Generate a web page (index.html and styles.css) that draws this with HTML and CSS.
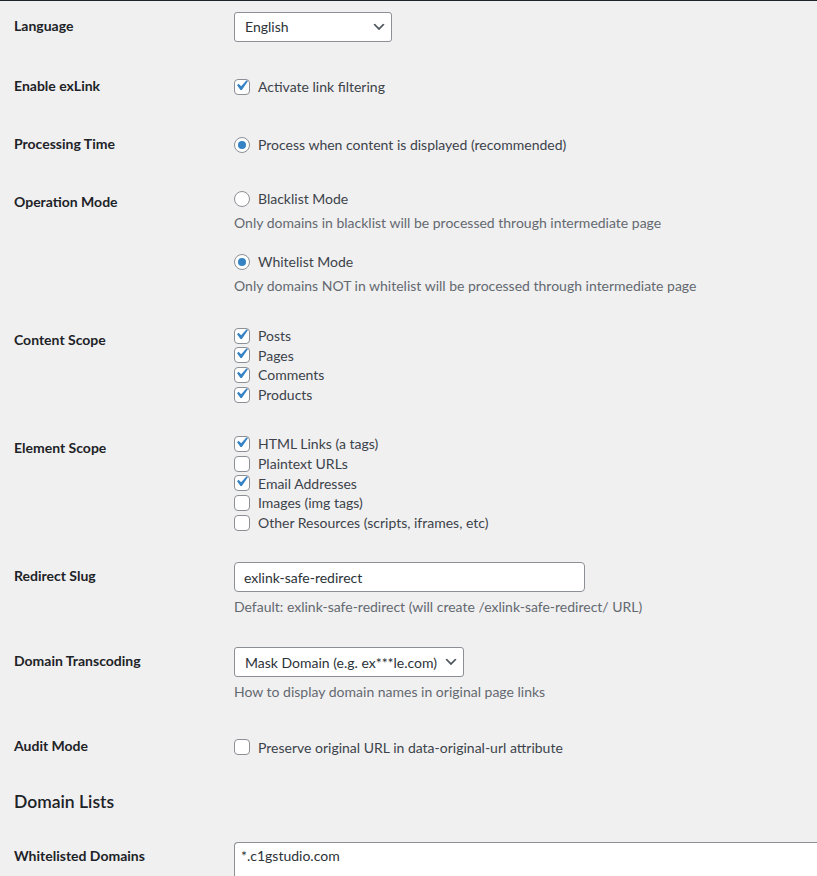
FILE: index.html
```html
<!DOCTYPE html>
<html lang="en">
<head>
<meta charset="utf-8">
<title>exLink Settings</title>
<link rel="stylesheet" href="styles.css">
</head>
<body>
<div class="adminbar"></div>
<main class="wrap">
  <div class="form-table">
    <div class="row first">
      <div class="th">Language</div>
      <div class="td">
        <div class="select select-lang"><span>English</span><svg class="chev" viewBox="0 0 20 20" width="16" height="16"><path d="M5 6l5 5 5-5 2 1-7 7-7-7 2-1z" fill="#50575e"/></svg></div>
      </div>
    </div>
    <div class="row">
      <div class="th">Enable exLink</div>
      <div class="td single">
        <label class="opt"><span class="cb on"><svg viewBox="0 0 20 20"><path d="M14.83 4.89l1.34.94-5.81 8.38H9.02L5.78 9.67l1.34-1.250 2.57 2.4z" fill="#3582c4"/></svg></span>Activate link filtering</label>
      </div>
    </div>
    <div class="row">
      <div class="th">Processing Time</div>
      <div class="td single">
        <label class="opt"><span class="rb on"></span>Process when content is displayed (recommended)</label>
      </div>
    </div>
    <div class="row">
      <div class="th">Operation Mode</div>
      <div class="td">
        <label class="opt mode"><span class="rb"></span>Blacklist Mode</label>
        <p class="description mode-desc">Only domains in blacklist will be processed through intermediate page</p>
        <label class="opt mode mode-second"><span class="rb on"></span>Whitelist Mode</label>
        <p class="description mode-desc">Only domains NOT in whitelist will be processed through intermediate page</p>
      </div>
    </div>
    <div class="row">
      <div class="th">Content Scope</div>
      <div class="td list">
        <label class="opt"><span class="cb on"><svg viewBox="0 0 20 20"><path d="M14.83 4.89l1.34.94-5.81 8.38H9.02L5.78 9.67l1.34-1.25 2.57 2.4z" fill="#3582c4"/></svg></span>Posts</label>
        <label class="opt"><span class="cb on"><svg viewBox="0 0 20 20"><path d="M14.83 4.89l1.34.94-5.81 8.38H9.02L5.78 9.67l1.34-1.25 2.57 2.4z" fill="#3582c4"/></svg></span>Pages</label>
        <label class="opt"><span class="cb on"><svg viewBox="0 0 20 20"><path d="M14.83 4.89l1.34.94-5.81 8.38H9.02L5.78 9.67l1.34-1.25 2.57 2.4z" fill="#3582c4"/></svg></span>Comments</label>
        <label class="opt"><span class="cb on"><svg viewBox="0 0 20 20"><path d="M14.83 4.89l1.34.94-5.81 8.38H9.02L5.78 9.67l1.34-1.25 2.57 2.4z" fill="#3582c4"/></svg></span>Products</label>
      </div>
    </div>
    <div class="row">
      <div class="th">Element Scope</div>
      <div class="td list">
        <label class="opt"><span class="cb on"><svg viewBox="0 0 20 20"><path d="M14.83 4.89l1.34.94-5.81 8.38H9.02L5.78 9.67l1.34-1.25 2.57 2.4z" fill="#3582c4"/></svg></span>HTML Links (a tags)</label>
        <label class="opt"><span class="cb"></span>Plaintext URLs</label>
        <label class="opt"><span class="cb on"><svg viewBox="0 0 20 20"><path d="M14.83 4.89l1.34.94-5.81 8.38H9.02L5.78 9.67l1.34-1.25 2.57 2.4z" fill="#3582c4"/></svg></span>Email Addresses</label>
        <label class="opt"><span class="cb"></span>Images (img tags)</label>
        <label class="opt"><span class="cb"></span>Other Resources (scripts, iframes, etc)</label>
      </div>
    </div>
    <div class="row">
      <div class="th">Redirect Slug</div>
      <div class="td">
        <div class="input regular-text">exlink-safe-redirect</div>
        <p class="description field-desc">Default: exlink-safe-redirect (will create /exlink-safe-redirect/ URL)</p>
      </div>
    </div>
    <div class="row">
      <div class="th">Domain Transcoding</div>
      <div class="td">
        <div class="select select-trans"><span>Mask Domain (e.g. ex***le.com)</span><svg class="chev" viewBox="0 0 20 20" width="16" height="16"><path d="M5 6l5 5 5-5 2 1-7 7-7-7 2-1z" fill="#50575e"/></svg></div>
        <p class="description field-desc">How to display domain names in original page links</p>
      </div>
    </div>
    <div class="row">
      <div class="th">Audit Mode</div>
      <div class="td single">
        <label class="opt"><span class="cb"></span>Preserve original URL in data-original-url attribute</label>
      </div>
    </div>
  </div>

  <h2 class="section-title">Domain Lists</h2>

  <div class="form-table">
    <div class="row last">
      <div class="th">Whitelisted Domains</div>
      <div class="td">
        <div class="textarea">*.c1gstudio.com</div>
      </div>
    </div>
  </div>
</main>
</body>
</html>
```
FILE: styles.css
```css
html, body {
  margin: 0;
  padding: 0;
  height: 876px;
  overflow: hidden;
  background: #f0f0f1;
}

body {
  font-family: Lato, "Liberation Sans", sans-serif;
  font-size: 14px;
  color: #3c434a;
  line-height: 1.4;
}

.adminbar {
  height: 1px;
  background: #1d2327;
}

.wrap {
  padding-left: 14px;
}

.row {
  display: grid;
  grid-template-columns: 220px 1fr;
}

.th {
  padding: 20px 10px 20px 0;
  line-height: 18px;
  font-weight: 700;
  color: #1d2327;
}

.td {
  padding: 15px 0;
  min-width: 0;
}

.row.first .th {
  padding-top: 16px;
}

.row.first .td {
  padding-top: 11px;
}

.row.last .td {
  padding-bottom: 0;
}

.row.last .th {
  padding-bottom: 0;
}

.td.single {
  padding-top: 20px;
}

.opt {
  display: flex;
  align-items: center;
  height: 20px;
  white-space: nowrap;
}

.td.list .opt {
  height: 19.6px;
}

.opt.mode {
  height: 22px;
}

.opt.mode-second {
  margin-top: 18px;
}

.cb, .rb {
  box-sizing: border-box;
  flex: none;
  width: 16px;
  height: 16px;
  margin-right: 8px;
  border: 1px solid #8c8f94;
  background: #fff;
  display: flex;
  align-items: center;
  justify-content: center;
}

.cb {
  border-radius: 4px;
}

.cb svg {
  width: 21px;
  height: 21px;
  flex: none;
  margin: -3px 0 0 -1px;
}

.rb {
  border-radius: 50%;
}

.rb.on::before {
  content: "";
  width: 8px;
  height: 8px;
  border-radius: 50%;
  background: #3582c4;
}

.description {
  margin: 0;
  color: #646970;
  line-height: 20px;
  white-space: nowrap;
}

.mode-desc {
  margin-top: 3px;
}

.field-desc {
  margin-top: 5px;
}

.select, .input, .textarea {
  box-sizing: border-box;
  background: #fff;
  border: 1px solid #8c8f94;
  color: #2c3338;
}

.select {
  display: flex;
  align-items: center;
  justify-content: space-between;
  height: 30px;
  padding: 0 4px 0 10px;
  border-radius: 3px;
  white-space: nowrap;
}

.select-lang {
  width: 158px;
}

.select-trans {
  width: 230px;
}

.chev {
  flex: none;
}

.input {
  display: flex;
  align-items: center;
  height: 30px;
  padding: 0 9px;
  border-radius: 4px;
}

.regular-text {
  width: 351px;
}

.textarea {
  width: 100%;
  height: 34px;
  padding: 3px 6px 0;
  border-right: 0;
  border-bottom: 0;
  border-radius: 4px 0 0 0;
  line-height: 20px;
  overflow: hidden;
}

.section-title {
  margin: 15px 0 13px;
  font-size: 17.5px;
  line-height: 24px;
  font-weight: 600;
  color: #1d2327;
}
```
